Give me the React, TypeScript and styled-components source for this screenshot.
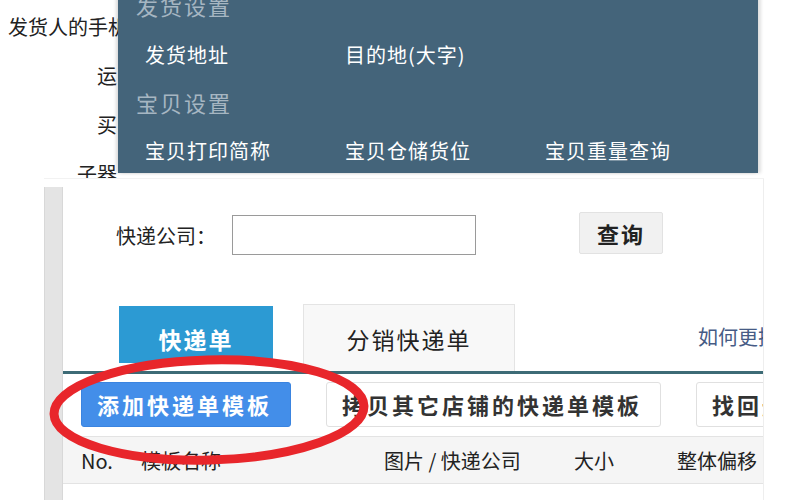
import React from 'react';
import styled, { createGlobalStyle } from 'styled-components';

const GlobalStyle = createGlobalStyle`
    html, body {
        margin: 0;
        padding: 0;
        background: #ffffff;
    }
    body {
        width: 800px;
        height: 500px;
        overflow: hidden;
        font-family: "Noto Sans CJK SC", "Noto Sans", sans-serif;
        color: #222;
    }
`;

const menuGroups = [
    { title: '发货设置', items: ['发货地址', '目的地(大字)'] },
    { title: '宝贝设置', items: ['宝贝打印简称', '宝贝仓储货位', '宝贝重量查询'] },
];

const columns = ['No.', '模板名称', '图片 / 快递公司', '大小', '整体偏移'];
const columnWidths = [60, 243, 190, 103, 104];

const App = () => {
    return (
        <Page>
            <GlobalStyle />
            <Behind>
                <BehindLine indent={8}>发货人的手机号码</BehindLine>
                <BehindLine indent={97}>运</BehindLine>
                <BehindLine indent={97}>买</BehindLine>
                <BehindLine indent={77}>子器</BehindLine>

                <Menu>
                    {menuGroups.map(group => (
                        <React.Fragment key={group.title}>
                            <MenuTitle>{group.title}</MenuTitle>
                            <MenuRow>
                                {group.items.map(item => (
                                    <MenuItem key={item}>{item}</MenuItem>
                                ))}
                            </MenuRow>
                        </React.Fragment>
                    ))}
                </Menu>
            </Behind>

            <Panel>
                <SideBar />
                <Content>
                    <SearchRow>
                        <Label>快递公司：</Label>
                        <Input />
                        <QueryButton>查询</QueryButton>
                    </SearchRow>

                    <TabRow>
                        <Tab active>快递单</Tab>
                        <Tab>分销快递单</Tab>
                        <HelpLink>如何更换快递单模板</HelpLink>
                    </TabRow>

                    <ActionRow>
                        <ActionButton primary width={210}>添加快递单模板</ActionButton>
                        <ActionButton width={335}>拷贝其它店铺的快递单模板</ActionButton>
                        <ActionButton width={120}>找回删除的模板</ActionButton>
                    </ActionRow>

                    <TableHead>
                        {columns.map((col, i) => (
                            <HeadCell key={col} width={columnWidths[i]}>
                                {col}
                            </HeadCell>
                        ))}
                    </TableHead>
                </Content>

                <Mark width="330" height="116" viewBox="0 0 330 116">
                    <ellipse
                        cx="162"
                        cy="56"
                        rx="155"
                        ry="50"
                        fill="none"
                        stroke="#e8262b"
                        strokeWidth="9"
                        transform="rotate(-1.5 162 56)"
                    />
                </Mark>
            </Panel>
        </Page>
    );
};

const Page = styled.div`
    position: relative;
    width: 800px;
    height: 500px;
    overflow: hidden;
`;

const Behind = styled.div`
    position: relative;
    height: 178px;
    overflow: hidden;
    padding-top: 14px;
    box-sizing: border-box;
`;

const BehindLine = styled.div<{ indent: number }>`
    height: 49px;
    padding-left: ${props => props.indent}px;
    font-size: 20px;
    line-height: 26px;
    color: #222;
    white-space: nowrap;
`;

const Menu = styled.div`
    position: absolute;
    left: 118px;
    top: -20px;
    width: 640px;
    height: 193px;
    background: #44647a;
    box-shadow: -2px 0 3px rgba(0, 0, 0, 0.15), 3px 0 3px rgba(0, 0, 0, 0.12);
    padding-left: 18px;
    box-sizing: border-box;
    display: flex;
    flex-direction: column;
`;

const MenuTitle = styled.div`
    height: 50px;
    line-height: 50px;
    font-size: 22px;
    color: #a6b6c2;
    letter-spacing: 2px;
`;

const MenuRow = styled.div`
    display: grid;
    grid-template-columns: 200px 200px 200px;
    height: 50px;
    align-items: center;
    padding-left: 9px;
    padding-top: 2px;
`;

const MenuItem = styled.div`
    font-size: 20px;
    letter-spacing: 1px;
    color: #ffffff;
`;

const Panel = styled.div`
    position: relative;
    display: flex;
    height: 322px;
    margin-left: 44px;
    width: 720px;
    border-top: 1px solid #f2f2f2;
`;

const SideBar = styled.div`
    width: 17px;
    margin-top: 8px;
    background: #e4e4e4;
    border-left: 1px solid #d8d8d8;
    border-right: 1px solid #d8d8d8;
`;

const Content = styled.div`
    flex: 1;
    overflow: hidden;
    border-right: 1px solid #eeeeee;
    display: flex;
    flex-direction: column;
`;

const SearchRow = styled.div`
    display: flex;
    align-items: center;
    height: 42px;
    margin-top: 35px;
    padding-left: 53px;
`;

const Label = styled.div`
    width: 116px;
    font-size: 20px;
    color: #222;
    white-space: nowrap;
`;

const Input = styled.div`
    width: 242px;
    height: 38px;
    border: 1px solid #9a9a9a;
    background: #fff;
`;

const QueryButton = styled.div`
    margin-left: 103px;
    width: 82px;
    height: 40px;
    background: #f1f1f1;
    border: 1px solid #e2e2e2;
    border-radius: 2px;
    display: flex;
    align-items: center;
    justify-content: center;
    font-size: 22px;
    font-weight: bold;
    letter-spacing: 2px;
    color: #222;
    margin-top: -4px;
`;

const TabRow = styled.div`
    display: flex;
    align-items: flex-end;
    height: 67px;
    margin-top: 48px;
    padding-left: 56px;
    border-bottom: 3px solid #3d6b76;
    white-space: nowrap;
`;

const Tab = styled.div<{ active?: boolean }>`
    flex-shrink: 0;
    height: ${props => (props.active ? '57px' : '67px')};
    width: ${props => (props.active ? '154px' : '212px')};
    margin-right: 30px;
    margin-bottom: ${props => (props.active ? '8px' : '0')};
    background: ${props => (props.active ? '#2c9ad3' : '#f8f8f8')};
    border: ${props => (props.active ? 'none' : '1px solid #e4e4e4')};
    border-bottom: none;
    box-sizing: border-box;
    display: flex;
    align-items: center;
    justify-content: center;
    padding-top: ${props => (props.active ? '8px' : '2px')};
    font-size: 23px;
    letter-spacing: 2px;
    font-weight: ${props => (props.active ? 'bold' : 'normal')};
    color: ${props => (props.active ? '#ffffff' : '#222')};
`;

const HelpLink = styled.div`
    flex-shrink: 0;
    margin-left: 153px;
    margin-bottom: 20px;
    font-size: 20px;
    color: #465b85;
`;

const ActionRow = styled.div`
    display: flex;
    align-items: center;
    height: 46px;
    margin-top: 7px;
    padding-left: 18px;
    gap: 35px;
    white-space: nowrap;
`;

const ActionButton = styled.div<{ primary?: boolean; width: number }>`
    flex-shrink: 0;
    width: ${props => props.width}px;
    height: 45px;
    box-sizing: border-box;
    border-radius: 3px;
    border: 1px solid ${props => (props.primary ? '#3a84e0' : '#e0e0e0')};
    background: ${props => (props.primary ? '#438ee9' : '#ffffff')};
    color: ${props => (props.primary ? '#ffffff' : '#333')};
    font-size: 22px;
    font-weight: bold;
    letter-spacing: 3px;
    display: flex;
    align-items: center;
    padding-left: 15px;
    overflow: hidden;
`;

const TableHead = styled.div`
    display: flex;
    align-items: center;
    height: 46px;
    margin-top: 9px;
    padding-left: 18px;
    background: #f5f5f5;
    border-top: 1px solid #e3e3e3;
    border-bottom: 1px solid #e3e3e3;
    white-space: nowrap;
`;

const HeadCell = styled.div<{ width: number }>`
    flex-shrink: 0;
    width: ${props => props.width}px;
    font-size: 20px;
    color: #222;
`;

const Mark = styled.svg`
    position: absolute;
    left: 3px;
    top: 175px;
    pointer-events: none;
`;

export default App;
